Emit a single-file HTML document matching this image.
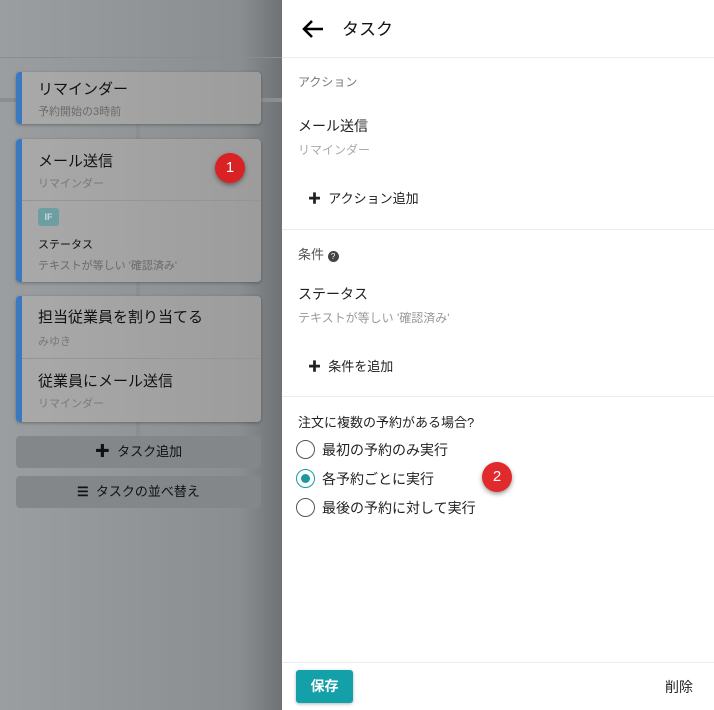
<!DOCTYPE html>
<html><head><meta charset="utf-8"><style>
*{box-sizing:border-box;margin:0;padding:0}
body{width:714px;height:710px;overflow:hidden;position:relative;font-family:"Liberation Sans","Noto Sans CJK JP",sans-serif;background:#fff}
#left{position:absolute;left:0;top:0;width:282px;height:710px;background:linear-gradient(90deg,#9a9ea0 0%,#8a8e90 85%,#6e7274 100%)}
.hl{position:absolute;left:0;width:282px;height:1px;background:#8a8d8f}
.vl{position:absolute;width:4px;background:#8c8f91;left:136px}
.card{position:absolute;left:16px;width:245px;background:linear-gradient(90deg,#a9a9a9,#9c9c9c);border-radius:4px;border-left:6px solid #3a78bf;box-shadow:0 1px 3px rgba(0,0,0,.3)}
.t{position:absolute;left:16px;font-size:15px;color:#111}
.s{position:absolute;left:16px;font-size:11px;color:#6a6a6a}
.sep{position:absolute;left:0;right:0;height:1px;background:#959595}
.btn{position:absolute;left:16px;width:245px;height:32px;background:#838789;border-radius:4px;font-size:13px;color:#111;text-align:center;line-height:32px}
.badge{position:absolute;width:30px;height:30px;border-radius:50%;background:#d92224;color:#fff;font-size:15px;text-align:center;line-height:30px;box-shadow:0 2px 5px rgba(0,0,0,.4)}
#right{position:absolute;left:282px;top:0;width:432px;height:710px;background:#fff}
.r{position:absolute;left:16px;color:#222}
.line{position:absolute;left:0;right:0;height:1px;background:#ececec}
.radio{position:absolute;left:14px;width:19px;height:19px;border-radius:50%;border:1.5px solid #555}
</style></head><body>
<div id="left">
<div class="hl" style="top:57px"></div>
<div class="hl" style="top:38px;background:#8e9294;opacity:0"></div>
<div class="hl" style="top:98px;height:4px;background:#8b8e90"></div>
<div class="vl" style="top:124px;height:16px"></div>
<div class="vl" style="top:282px;height:14px"></div>
<div class="vl" style="top:422px;height:14px"></div>
<div class="card" style="top:72px;height:52px">
<div class="t" style="top:6px">リマインダー</div>
<div class="s" style="top:31px">予約開始の3時前</div></div>
<div class="card" style="top:139px;height:143px">
<div class="t" style="top:11px">メール送信</div>
<div class="s" style="top:36px;color:#787878">リマインダー</div>
<div class="sep" style="top:61px"></div>
<div style="position:absolute;left:16px;top:69px;width:21px;height:18px;background:#6c9ea2;border-radius:3px;color:#c8dadb;font-size:9px;font-weight:bold;text-align:center;line-height:18px">IF</div>
<div class="s" style="top:97px;color:#111">ステータス</div>
<div class="s" style="top:118px">テキストが等しい '確認済み'</div></div>
<div class="card" style="top:296px;height:126px">
<div class="t" style="top:10px">担当従業員を割り当てる</div>
<div class="s" style="top:37px;color:#787878">みゆき</div>
<div class="sep" style="top:62px"></div>
<div class="t" style="top:74px">従業員にメール送信</div>
<div class="s" style="top:99px;color:#7a7a7a">リマインダー</div></div>
<div class="btn" style="top:436px"><b style="font-size:15px">✚</b>&nbsp; タスク追加</div>
<div class="btn" style="top:476px"><b>☰</b>&nbsp; タスクの並べ替え</div>
<div class="badge" style="left:215px;top:153px">1</div>
</div>
<div id="right">
<svg style="position:absolute;left:19px;top:18px" width="24" height="22" viewBox="0 0 24 22"><path d="M22 11H3M11 3L3 11l8 8" stroke="#000" stroke-width="2.6" fill="none"/></svg>
<div class="r" style="left:60px;top:15px;font-size:17px;color:#111">タスク</div>
<div class="line" style="top:57px"></div>
<div class="r" style="top:73px;font-size:12px;color:#777">アクション</div>
<div class="r" style="top:116px;font-size:14px">メール送信</div>
<div class="r" style="top:141px;font-size:12px;color:#aaa">リマインダー</div>
<div class="r" style="left:26px;top:188px;font-size:13px"><b>✚</b>&nbsp; アクション追加</div>
<div class="line" style="top:229px"></div>
<div class="r" style="top:244px;font-size:13px;color:#555">条件 <span style="display:inline-block;width:11px;height:11px;border-radius:50%;background:#444;color:#fff;font-size:8px;text-align:center;line-height:11px;vertical-align:0">?</span></div>
<div class="r" style="top:284px;font-size:14px">ステータス</div>
<div class="r" style="top:309px;font-size:12px;color:#999">テキストが等しい '確認済み'</div>
<div class="r" style="left:26px;top:356px;font-size:13px"><b>✚</b>&nbsp; 条件を追加</div>
<div class="line" style="top:396px"></div>
<div class="r" style="top:412px;font-size:13px;color:#222">注文に複数の予約がある場合?</div>
<div class="radio" style="top:440px"></div>
<div class="r" style="left:40px;top:440px;font-size:14px">最初の予約のみ実行</div>
<div class="radio" style="top:469px;border-color:#1a9aa0"><div style="position:absolute;left:3.5px;top:3.5px;width:9px;height:9px;border-radius:50%;background:#1a9aa0"></div></div>
<div class="r" style="left:40px;top:469px;font-size:14px">各予約ごとに実行</div>
<div class="radio" style="top:498px"></div>
<div class="r" style="left:40px;top:498px;font-size:14px">最後の予約に対して実行</div>
<div class="badge" style="left:200px;top:462px;background:#e02a2c">2</div>
<div class="line" style="top:662px"></div>
<div style="position:absolute;left:14px;top:670px;width:57px;height:33px;background:#13a0a8;border-radius:3px;color:#fff;font-size:14px;font-weight:bold;text-align:center;line-height:33px;box-shadow:0 1px 3px rgba(0,0,0,.3)">保存</div>
<div class="r" style="left:383px;top:677px;font-size:14px;color:#222">削除</div>
</div>
</body></html>
